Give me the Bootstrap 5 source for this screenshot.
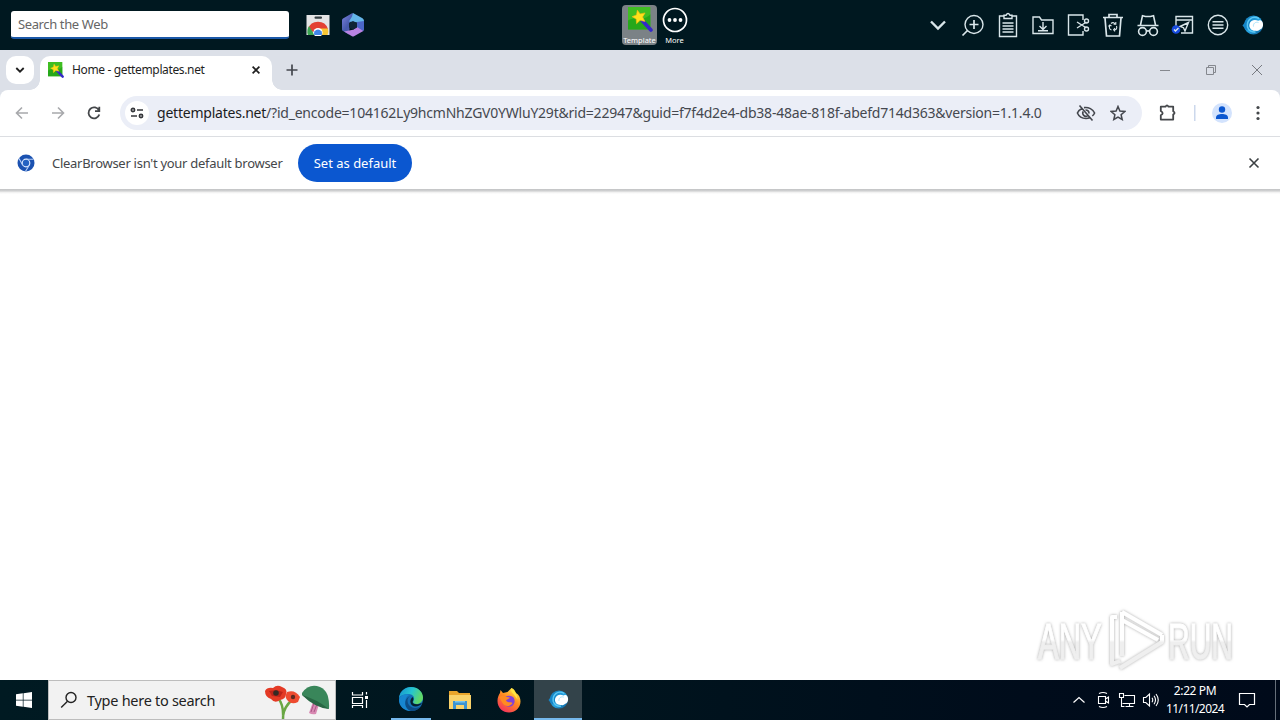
<!DOCTYPE html>
<html lang="en">
<head>
  <meta charset="UTF-8" />
  <meta name="viewport" content="width=device-width, initial-scale=1.0" />
  <title>Home - gettemplates.net</title>
  <link rel="stylesheet" href="https://cdn.jsdelivr.net/npm/bootstrap@5.3.0/dist/css/bootstrap.min.css" />
  <style>
    body {
      width: 1280px;
      height: 720px;
      overflow: hidden;
      background-color: #fff;
      color: #202124;
      font-family: "Noto Sans", "Open Sans", sans-serif;
      font-size: 13px;
      line-height: 1;
    }
    svg {
      display: block;
      flex: none;
    }
    .btn {
      --bs-btn-padding-x: 0;
      --bs-btn-padding-y: 0;
      --bs-btn-border-width: 0;
      line-height: 1;
    }
    .cell {
      flex: none;
      display: flex;
      align-items: center;
      justify-content: center;
    }

    /* Desktop toolbar */
    .deskbar {
      height: 50px;
      background-color: #001820;
      padding: 0 10px 0 11px;
    }
    .web-search {
      width: 278px;
      height: 28px;
      padding: 0 7px;
      border: 0;
      border-bottom: 2px solid #1a58a8;
      border-radius: 3px;
      background-color: #fff;
      font-size: 13px;
      letter-spacing: -0.38px;
    }
    .web-search::placeholder {
      color: #666;
      opacity: 1;
    }
    .deskbar .cell {
      width: 35px;
      height: 50px;
    }
    .deskbar .pinned {
      margin-left: 11px;
    }
    .line-icon {
      fill: none;
      stroke: #d9e6ea;
      stroke-width: 1.4;
    }
    .shortcuts {
      margin-left: 252px;
    }
    .shortcut {
      width: 35px;
      height: 40px;
      color: #fff;
      font-size: 7.5px;
      border-radius: 4px;
      overflow: hidden;
    }
    .shortcut.active {
      background-color: #7b8286;
    }
    .shortcut span {
      margin-top: 2px;
      white-space: nowrap;
    }

    /* Tab strip */
    .tabstrip {
      height: 40px;
      padding-left: 6px;
      background-color: #dce0e8;
    }
    .tab-list-btn {
      width: 28px;
      height: 28px;
      margin-top: 6px;
      background-color: #fff;
      border-radius: 10px;
    }
    .tab-flare {
      width: 10px;
      height: 10px;
      align-self: flex-end;
      background: radial-gradient(circle at 0 0, transparent 9.5px, #fff 10px);
    }
    .tab-flare.right {
      background: radial-gradient(circle at 100% 0, transparent 9.5px, #fff 10px);
    }
    .tab-flare.left {
      margin-left: -4px;
    }
    .page-tab {
      width: 232px;
      height: 34px;
      margin-top: 6px;
      padding: 0 8px 6px 8px;
      background-color: #fff;
      border-radius: 10px 10px 0 0;
      font-size: 12px;
      letter-spacing: -0.36px;
      color: #1f1f1f;
    }
    .window-btn {
      width: 46px;
      height: 40px;
    }

    /* Address bar */
    .addressbar {
      background-color: #dce0e8;
    }
    .addressbar-inner {
      height: 47px;
      padding: 0 4px;
      background-color: #fff;
      border-bottom: 1px solid #dcdee2;
      border-radius: 8px 8px 0 0;
    }
    .addressbar-inner .cell {
      width: 36px;
      height: 34px;
    }
    .omnibox {
      flex: none;
      width: 1022px;
      height: 34px;
      margin-left: 8px;
      padding: 0 8px 0 5px;
      border-radius: 17px;
      background-color: #ebeef7;
    }
    .addressbar-inner .site-info {
      width: 24px;
      height: 24px;
      background-color: #fff;
      border-radius: 50%;
    }
    .url {
      flex: none;
      width: 890px;
      margin-left: 8px;
      font-size: 14px;
      letter-spacing: -0.225px;
      color: #45484f;
      white-space: nowrap;
    }
    .url b {
      font-weight: 400;
      color: #1b1c22;
    }
    .addressbar-inner .omnibox .page-action {
      width: 32px;
    }
    .addressbar-inner .divider {
      width: 17px;
    }

    /* Default browser prompt */
    .infobar {
      height: 52px;
      padding: 0 14px 0 17px;
      color: #45474a;
    }
    .prompt-text {
      flex: none;
      width: 230px;
      margin-left: 17px;
      letter-spacing: -0.28px;
      white-space: nowrap;
    }
    .btn-default-browser {
      --bs-btn-color: #fff;
      --bs-btn-bg: #0b57d0;
      width: 114px;
      height: 38px;
      font-size: 13px;
      margin-left: 16px;
    }
    .infobar-edge {
      height: 5px;
      background: linear-gradient(#c2c3c5, #cfd0d1 35%, #f2f2f2 70%, #fff);
    }
    .page {
      height: 486px;
      padding: 0 40px 6px 0;
    }

    /* Taskbar */
    .taskbar {
      height: 40px;
      background: linear-gradient(90deg, #001a22, #00151e 45%, #000c1b 80%, #000a1a);
      color: #fff;
    }
    .taskbar .cell {
      width: 48px;
      height: 40px;
    }
    .task-search {
      width: 288px;
      height: 40px;
      background-color: #f2f2f2;
      border: 1px solid #bdbdbd;
      padding-left: 11px;
      color: #222;
      font-size: 14.5px;
    }
    .search-text {
      margin-left: 9px;
      letter-spacing: -0.28px;
      white-space: nowrap;
    }
    .task-list {
      gap: 1px;
      padding-left: 3px;
    }
    .running {
      border-bottom: 2px solid #76b9ed;
    }
    .taskbar .running.edge {
      width: 40px;
      margin: 0 4px;
    }
    .focused {
      background-color: #33434a;
    }
    .taskbar .tray {
      width: 24px;
    }
    .clock {
      width: 64px;
      font-size: 12px;
      letter-spacing: -0.4px;
      line-height: 18px;
      text-align: center;
      white-space: nowrap;
    }
    .clock-date {
      letter-spacing: -0.6px;
    }
    .taskbar .action-center {
      width: 40px;
    }
    .show-desktop {
      width: 5px;
      height: 40px;
      border-left: 1px solid #666f7a;
    }
  </style>
</head>
<body>
  <svg width="0" height="0" class="position-absolute">
    <defs>
      <linearGradient id="wave" x1="0" y1="0" x2="1" y2="1">
        <stop offset="0" stop-color="#1277b5" /><stop offset=".55" stop-color="#27a5e3" /><stop offset="1" stop-color="#0a568d" />
      </linearGradient>
      <linearGradient id="hexA" x1="0" y1="0" x2="1" y2="1">
        <stop offset="0" stop-color="#7f83df" /><stop offset=".5" stop-color="#465aac" /><stop offset="1" stop-color="#6a63c0" />
      </linearGradient>
      <linearGradient id="edgeTop" x1="0" y1="0" x2="1" y2=".35">
        <stop offset="0" stop-color="#168fcf" /><stop offset=".55" stop-color="#25c5d1" /><stop offset="1" stop-color="#60d867" />
      </linearGradient>
      <linearGradient id="fire" x1=".8" y1="0" x2=".2" y2="1">
        <stop offset="0" stop-color="#fff04b" /><stop offset=".45" stop-color="#ff8a20" /><stop offset="1" stop-color="#f52b61" />
      </linearGradient>
      <symbol id="wand" viewBox="0 0 24 24">
        <path fill="#3fbe22" d="M0 0h21.500v21.500H0z" />
        <path fill="#169916" d="M0 13c7-5 14 2 21.500-6v14.500H0z" opacity=".6" />
        <path stroke="#3528c9" stroke-width="3.600" stroke-linecap="round" d="m14 13.500 8 8.500" />
        <path fill="#ffe11b" stroke="#f7b811" stroke-width=".6" d="m9 3 2.600 3.600 4.800-.9-2.400 3.900 2.300 4.200-4.700-1-3.400 3.200-.3-4.500-4-2.200 4.200-1.700z" />
      </symbol>
      <symbol id="clear" viewBox="0 0 22 22">
        <circle cx="11.500" cy="11" r="9.500" fill="url(#wave)" />
        <path fill="#1586c8" d="M4 7 .5 11.500 4 16l4-1V6z" />
        <path fill="none" stroke="#5cc8f4" stroke-width="1.500" d="M17 4.500C10 1 4.500 6 5.500 13c1 4 5 5.500 8 5" />
        <path fill="#fff" d="M20.500 8c-1-2-3.300-2-4.300-1.200C13 5 8.500 6 7.500 10c-1 4 2.200 7 6 6.800 2 .5 3.500-.2 4.500-1.300 2.800-.8 3.800-4.500 2.500-7.500z" />
        <path fill="none" stroke="#a9e2fa" d="M16.500 8.500c-3-1-5.500 1-5 4" />
      </symbol>
    </defs>
  </svg>

  <header class="deskbar d-flex align-items-center">
    <input class="web-search" type="text" placeholder="Search the Web" />
    <div class="cell pinned">
      <svg width="24" height="22" viewBox="0 0 24 22">
        <path fill="#e5e5e6" d="M.5 1h23v20H.5z" />
        <rect x="8.500" y="2.500" width="7.500" height="2.300" rx="1" fill="#333c40" />
        <path fill="#e34133" d="M2 15a10.500 10.500 0 0 1 20 0l-1.500 1H12l-5 2z" />
        <path fill="#3ba552" d="m3 12 5.500 9H2a10 10 0 0 1 1-9z" />
        <path fill="#f9c633" d="M14 14.500h7.900A10 10 0 0 1 21.500 21H12z" />
        <circle cx="12" cy="18.500" r="4.600" fill="#fff" />
        <path fill="#4285e8" d="M8.300 21a4 4 0 1 1 7.400 0z" />
      </svg>
    </div>
    <div class="cell">
      <svg width="24" height="26" viewBox="0 0 24 26">
        <path fill="url(#hexA)" d="M11.500 1 2 6.500Q1 7 1 8.500v9q0 1 1 1.600l6 3.400 1-12 6-4z" />
        <path fill="#64b5e9" d="m12 1 9.500 5.300q1.500 1 1.500 2.500v5.200l-7-3.500-8-1 3-5z" />
        <path fill="#4b67c8" d="m16 10 7-1v8.500q0 1-1 1.700l-6-2.700z" />
        <path fill="#b983e3" d="m3 19.600 8 4.600q1 .6 2 0l9.300-5.300L16 15l-4 2.800z" />
        <path fill="#102636" d="m12 9 4 2v4.500l-4 2.300-4-2.300V11z" />
      </svg>
    </div>

    <div class="shortcuts d-flex">
      <div class="shortcut active d-flex flex-column align-items-center">
        <svg width="26" height="30" viewBox="0 0 26 30"><use href="#wand" x="1" y="2" width="25" height="25" /></svg>
        <span>Template</span>
      </div>
      <div class="shortcut d-flex flex-column align-items-center">
        <svg width="28" height="30" viewBox="0 0 28 30">
          <circle cx="14" cy="15" r="11.500" fill="none" stroke="#fff" stroke-width="1.700" />
          <g fill="#fff"><circle cx="8.500" cy="15" r="1.900" /><circle cx="14" cy="15" r="1.900" /><circle cx="19.500" cy="15" r="1.900" /></g>
        </svg>
        <span>More</span>
      </div>
    </div>

    <div class="d-flex ms-auto">
      <div class="cell"><svg class="line-icon" width="24" height="26"><path stroke-width="2.400" d="m5 9.500 7 7 7-7" /></svg></div>
      <div class="cell">
        <svg class="line-icon" width="24" height="26">
          <circle cx="13" cy="12.500" r="9" /><path d="m6.500 18.500-5 5M13 8v9M8.500 12.500h9" stroke-width="1.700" />
        </svg>
      </div>
      <div class="cell">
        <svg class="line-icon" width="24" height="26">
          <path d="M8 4H3.500v20.500h17V4H16" /><path d="M8 6.500V3.300h2q2-3.600 4 0h2v3.200zM6.500 11h11M6.500 14h11M6.500 17h11M6.500 20h11" />
        </svg>
      </div>
      <div class="cell">
        <svg class="line-icon" width="24" height="26">
          <path d="M2 6V5h6.500l2 3H22v13.500H2zM12 10v7m-3.500-3 3.500 3.500 3.500-3.500M7 18.800h10" />
        </svg>
      </div>
      <div class="cell">
        <svg class="line-icon" width="24" height="26">
          <path d="M17 8V3H2.500v20H17v-4M11 10l9.500 6M11 16l9.500-6" />
          <circle cx="20.500" cy="9" r="2" /><circle cx="20.500" cy="17" r="2" />
        </svg>
      </div>
      <div class="cell">
        <svg class="line-icon" width="24" height="26">
          <path stroke-width="1.700" d="M2 5.500h20M8 5V2.500h8V5M4 6l1.500 18h13L20 6" />
          <path d="M10 11.500q2.300-2 4 .5M8.800 13.500q-1.300 3.500 1.700 4.500M13.500 18q3-.5 2-4M14.800 10v2.200h-2.200M7.500 14.500l1.400-1.500 1.600 1M14 16l-1.400 1.800L14 19.300" stroke-width="1.100" />
        </svg>
      </div>
      <div class="cell">
        <svg class="line-icon" width="24" height="26">
          <path stroke-width="1.600" d="M1.500 13.500h21M4.500 13l2-9.300 3 .8h5l3-.8 2 9.300M10.500 19.500q1.500-1.500 3 0" />
          <circle cx="6.500" cy="19.500" r="3.900" stroke-width="1.600" /><circle cx="17.500" cy="19.500" r="3.900" stroke-width="1.600" />
        </svg>
      </div>
      <div class="cell">
        <svg class="line-icon" width="24" height="26">
          <path d="M5 16V4.500h16.500v16.500H10M5 8h16.500M9 14.500l8.500-4-3.500 8.500-1.500-3.300z" />
          <circle cx="5" cy="17.500" r="4.300" fill="#174be0" stroke="none" /><path d="m3 17.500 1.500 1.500 3-3" />
        </svg>
      </div>
      <div class="cell">
        <svg class="line-icon" width="24" height="26"><circle cx="12" cy="13" r="9.700" /><path d="M6.500 9.700h11M6.500 13h11M6.500 16.300h11" /></svg>
      </div>
      <div class="cell"><svg width="22" height="22"><use href="#clear" /></svg></div>
    </div>
  </header>

  <div class="tabstrip d-flex">
    <button class="btn tab-list-btn cell" type="button">
      <svg width="10" height="8" fill="none" stroke="#1f1f1f" stroke-width="1.800"><path d="m1.300 2 3.700 3.700L8.700 2" /></svg>
    </button>
    <div class="tab-flare left"></div>
    <div class="page-tab d-flex align-items-center">
      <svg width="16" height="16"><use href="#wand" /></svg>
      <span class="ms-2">Home - gettemplates.net</span>
      <svg class="ms-auto me-1" width="8" height="8" fill="none" stroke="#1f1f1f" stroke-width="1.700"><path d="m.6.6 6.800 6.800m0-6.800L.6 7.400" /></svg>
    </div>
    <div class="tab-flare right"></div>
    <div class="cell ms-1"><svg width="12" height="40" stroke="#44474e" stroke-width="1.700"><path d="M6 14.500v11M.5 20h11" /></svg></div>
    <div class="d-flex ms-auto">
      <div class="cell window-btn"><svg width="12" height="12" stroke="#85888e"><path d="M1 6.500h10" /></svg></div>
      <div class="cell window-btn"><svg width="12" height="12" fill="none" stroke="#85888e"><path d="M1.500 3.500h7v7h-7zM3.500 3V1.500h7v7H9" /></svg></div>
      <div class="cell window-btn"><svg width="12" height="12" stroke="#777a80"><path d="m1 1 10 10M11 1 1 11" /></svg></div>
    </div>
  </div>

  <div class="addressbar">
    <nav class="addressbar-inner d-flex align-items-center">
      <div class="cell"><svg width="16" height="16" fill="none" stroke="#a8a9ac" stroke-width="1.600"><path d="M14 8H3m5-5.500L2.500 8 8 13.500" /></svg></div>
      <div class="cell"><svg width="16" height="16" fill="none" stroke="#a8a9ac" stroke-width="1.600"><path d="M2 8h11M8 2.500 13.500 8 8 13.500" /></svg></div>
      <div class="cell">
        <svg width="16" height="16" fill="none" stroke="#44474a" stroke-width="1.800"><path d="M13 5.500A5.500 5.500 0 1 0 13.300 9.500M13.300 1.800v4.400H9" /></svg>
      </div>
      <div class="omnibox d-flex align-items-center">
        <div class="cell site-info">
          <svg width="14" height="12" fill="none" stroke="#34363a" stroke-width="1.700">
            <circle cx="3" cy="3" r="1.600" /><path d="M7 3h6M1 9h6" /><circle cx="11" cy="9" r="1.600" />
          </svg>
        </div>
        <div class="url"><b>gettemplates.net</b>/?id_encode=104162Ly9hcmNhZGV0YWluY29t&amp;rid=22947&amp;guid=f7f4d2e4-db38-48ae-818f-abefd714d363&amp;version=1.1.4.0</div>
        <div class="cell page-action ms-auto">
          <svg width="20" height="18" fill="none" stroke="#44474e" stroke-width="1.600">
            <path d="M6 4.500C3.500 5.700 2 7.500 1.400 9c1.500 3.500 5 5.500 8.600 5.500 1.300 0 2.500-.2 3.600-.7M8 3.600c4.500-.8 9 1.700 10.600 5.400-.5 1.200-1.300 2.200-2.300 3M7.200 7.500a3.200 3.200 0 0 0 4.300 4.400M9.500 6a3.200 3.200 0 0 1 3.500 3.500M3.500 1.500l13 15" />
          </svg>
        </div>
        <div class="cell page-action">
          <svg width="16" height="16" fill="none" stroke="#44474e" stroke-width="1.500"><path d="m8 1.500 1.900 4.600 4.900.4-3.700 3.200 1.100 4.800L8 12l-4.200 2.500 1.100-4.800L1.200 6.500l4.900-.4z" /></svg>
        </div>
      </div>
      <div class="cell ms-2">
        <svg width="18" height="18" fill="none" stroke="#44474a" stroke-width="1.800"><path stroke-linejoin="round" d="M1.800 2.700h4.700q1.500-2.600 3 0h4.700v4.600q2.700 1.700 0 3.300v5H1.800v-4.300q3.700-2 0-4.300z" /></svg>
      </div>
      <div class="cell divider"><svg width="2" height="16"><path fill="#ccd8ec" d="M0 0h1.500v16H0z" /></svg></div>
      <div class="cell ms-auto">
        <svg width="20" height="20"><circle cx="10" cy="10" r="10" fill="#d3e3fd" /><circle cx="10" cy="6.500" r="3.200" fill="#0b57d0" /><path fill="#0b57d0" d="M4 16v-1.500C4 12 7 11 10 11s6 1 6 3.500V16z" /></svg>
      </div>
      <div class="cell"><svg width="4" height="16" fill="#44474a"><circle cx="2" cy="2.500" r="1.600" /><circle cx="2" cy="8" r="1.600" /><circle cx="2" cy="13.500" r="1.600" /></svg></div>
    </nav>
  </div>

  <div class="infobar d-flex align-items-center">
    <svg width="18" height="18" viewBox="0 0 18 18">
      <circle cx="9" cy="9" r="8.500" fill="#1b52b1" /><circle cx="9" cy="9" r="3.800" fill="#2462c2" stroke="#dce8ff" stroke-width="1.200" />
      <path fill="none" stroke="#b8cff6" stroke-width="1.100" d="M9 5.200h7.500M5.700 11 2 4.500M12.400 11l-4 6.500" />
    </svg>
    <span class="prompt-text">ClearBrowser isn't your default browser</span>
    <button class="btn btn-default-browser rounded-pill" type="button">Set as default</button>
    <svg class="ms-auto me-1" width="16" height="16" stroke="#3c4043" stroke-width="1.600"><path d="m3.500 3.500 9 9m0-9-9 9" /></svg>
  </div>
  <div class="infobar-edge"></div>

  <main class="page d-flex justify-content-end align-items-end">
    <svg width="212" height="72" viewBox="1028 602 212 72">
      <defs>
        <filter id="halo" x="-10%" y="-20%" width="120%" height="140%">
          <feDropShadow dx="0" dy="0" stdDeviation="1.500" flood-color="#888" flood-opacity=".75" />
        </filter>
        <linearGradient id="fade" x1="0" y1="610" x2="0" y2="672" gradientUnits="userSpaceOnUse">
          <stop offset=".48" stop-color="#fff" /><stop offset=".52" stop-color="#efefef" />
        </linearGradient>
        <linearGradient id="letterFade" x1="0" y1="-49" x2="0" y2="13" gradientUnits="userSpaceOnUse">
          <stop offset=".48" stop-color="#fff" /><stop offset=".52" stop-color="#efefef" />
        </linearGradient>
      </defs>
      <g filter="url(#halo)">
        <g fill="url(#letterFade)" stroke="url(#letterFade)" font-family="'Liberation Sans', sans-serif" font-size="50">
          <text transform="translate(1038 659) scale(.62 1)">ANY</text>
          <text transform="translate(1168 659) scale(.6 1)">RUN</text>
        </g>
        <path fill="none" stroke="url(#fade)" stroke-width="4" stroke-linejoin="round" d="M1117 617h-5v47l8-3M1122 612l40 23M1122 612v44M1122 620l36 20M1120 668l42-26v-7" />
      </g>
    </svg>
  </main>

  <footer class="taskbar d-flex align-items-center">
    <div class="cell"><svg width="16" height="16" fill="#fff"><path d="m0 2.300 6.800-1v6.400H0zM7.500 1.200 16 0v7.700H7.500zM0 8.400h6.800v6.400l-6.800-1zM7.500 8.400H16V16l-8.500-1.200z" /></svg></div>
    <div class="task-search d-flex align-items-center">
      <svg width="18" height="18" fill="none" stroke="#222" stroke-width="1.400"><circle cx="11" cy="6.500" r="5" /><path d="m7.500 10.300-6.300 6.300" /></svg>
      <span class="search-text">Type here to search</span>
      <svg class="ms-auto me-1" width="68" height="38" viewBox="263 681 68 38">
        <path fill="none" stroke="#69a744" stroke-width="2.500" d="M278 698q6 7 5 21M292 700q-8 7-9 16" />
        <path fill="#e43a25" d="M265 691q2-4 8-3 4-4 9-1 6 2 4 7 0 5-6 6-5 4-9-1-6-2-6-8z" />
        <path fill="#bd2419" d="m269 691 7-1 7 2-3 5-8-1z" /><circle cx="276" cy="693" r="2.800" fill="#352a25" />
        <path fill="#ee4b30" d="M287 692q8-3 13 5l-2 5q-6 3-10-1-4-4-1-9z" /><circle cx="293" cy="697" r="2.200" fill="#5d2820" />
        <path fill="#d889b2" d="m314 699 6 2-4 13q-4 1-7-1z" /><path stroke="#a95888" d="m314 703-3 9m6-8-3 8" />
        <path fill="#39865a" d="M302 693q7-10 18-6 10 4 9 22-12-2-27-14z" /><path fill="#286744" d="M302 695q14 4 27 14-14-1-27-14z" />
      </svg>
    </div>
    <div class="cell">
      <svg width="18" height="18" fill="none" stroke="#fff" stroke-width="1.200"><path d="M1.500 1v3h10V1M1.500 6.500h10v6h-10zM1.500 17v-2.500h10V17M15.500 1v2.500M15.500 9v8" /><path fill="#fff" stroke="none" d="M14 5h3v3h-3z" /></svg>
    </div>
    <div class="task-list d-flex me-auto">
      <div class="cell running edge">
        <svg width="26" height="26" viewBox="0 0 26 26">
          <circle cx="13" cy="13" r="12" fill="#146fb6" />
          <path fill="url(#edgeTop)" d="M1 12C2 5 7 1 13 1c7 0 12 5 12 10.500 0 4-3 6.500-6.500 6.500-3 0-4-1.500-3-3 2-4-1-7-5-7C6 8 3 9 1 12z" />
          <path fill="#1786d0" d="M1 14C2 9 8 7 12 9c-6 1-7 12 2 16C6 25.500 1 20 1 14z" />
          <path fill="#0d4d86" d="M12 10c-5 3-2 12 5 12 3 0 5-1 7-3-3 5-8 6.500-11 6C6 23 5 13 12 10z" />
          <path fill="#05202e" d="M14.500 11c1.500 1.500 1 3 .2 4.500-.7 1.800 3 4.500 9.300 1.500-1.200 2-4 3.500-6.500 3.500-5 0-7-6-3-9.500z" />
        </svg>
      </div>
      <div class="cell">
        <svg width="22" height="20" viewBox="0 0 22 20">
          <path fill="#e9a52b" d="M0 1h8l2 2h11v5H0z" /><path fill="#f9d26a" d="M0 5h22v14H0z" />
          <path fill="#3b93d1" d="M4 11h14v8h-3v-4H7v4H4z" /><path fill="#78c5ec" d="M6 11h10v1.500H6z" />
        </svg>
      </div>
      <div class="cell">
        <svg width="24" height="25" viewBox="0 0 24 25">
          <path fill="url(#fire)" d="M14.500 0c3 1 4 4 4.500 5 3 1.500 4.500 5 4.500 8.500C23.500 20 18 24.500 12 24.500S.5 20 .5 13c0-3.500 1.200-6 2.500-8l.5-3 2.500 3 4.500-1z" />
          <path fill="#8141d8" d="M7 10c2-2.500 6-3 9-1 2.500 2.500 2 7-1 9-3 1.500-7 .5-8-3z" />
          <path fill="#ff8b21" d="M2 9q4-3 8 0l3 .5c-1 2-3.500 1.500-4 3 2 3 5 1 6.500 2.500-2 4-8 4-10 0z" />
          <path fill="#ffe543" d="M14.500 0c-1 3 0 4 2 6l4 5.500C20 7 19 4 14.500 0z" />
        </svg>
      </div>
      <div class="cell running focused"><svg width="21" height="21"><use href="#clear" /></svg></div>
    </div>

    <div class="cell tray"><svg width="14" height="10" fill="none" stroke="#fff" stroke-width="1.200"><path d="m1.500 7.500 5.500-5 5.500 5" /></svg></div>
    <div class="cell tray"><svg width="16" height="18" fill="none" stroke="#fff" stroke-width="1.100"><path d="M3.500 5.500h7v7h-7zM10.500 8l3-2v6l-3-2M4 2.500q4-2 8 0M4 15.500q4 2 8 0" /></svg></div>
    <div class="cell tray"><svg width="18" height="16" fill="none" stroke="#fff" stroke-width="1.100"><path d="M6.500 3.500h10v8H4.500M11.500 12v2.500M7.500 14.500h8M1.500 1.500h4v4h-4zM3.500 6v8.500h3" /></svg></div>
    <div class="cell tray"><svg width="18" height="16" fill="none" stroke="#fff" stroke-width="1.100"><path d="M1.500 5.500h2.300L7.500 2v12l-3.700-3.500H1.500zM10 5.700q1.500 2.300 0 4.600M12 3.700q3 4.300 0 8.600M14 2q4.500 6 0 12" /></svg></div>
    <div class="clock">
      <div>2:22 PM</div>
      <div class="clock-date">11/11/2024</div>
    </div>
    <div class="cell action-center"><svg width="18" height="18" fill="none" stroke="#fff" stroke-width="1.200"><path d="M1.500 2.500h15v11h-5L9 16l-2.500-2.500h-5z" /></svg></div>
    <div class="show-desktop ms-2"></div>
  </footer>

  <script src="https://cdn.jsdelivr.net/npm/bootstrap@5.3.0/dist/js/bootstrap.bundle.min.js"></script>
</body>
</html>
